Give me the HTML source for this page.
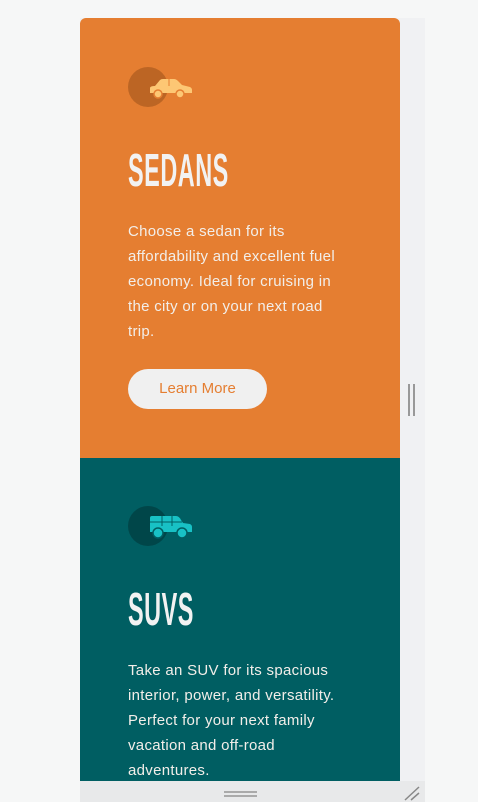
<!DOCTYPE html>
<html><head><meta charset="utf-8"><style>
*{margin:0;padding:0;box-sizing:border-box}
body{width:478px;height:802px;background:#f6f7f7;position:relative;overflow:hidden;font-family:"Liberation Sans",sans-serif}
.strip{position:absolute;left:80px;top:18px;width:345px;height:764px;background:#f0f1f3}
.card{position:absolute;left:80px;width:320px}
.o{top:18px;height:440px;background:#e57e31;border-radius:6px 6px 0 0}
.t{top:458px;height:323px;background:#005e62}
.circ{position:absolute;left:48px;width:40px;height:40px;border-radius:50%}
h2{position:absolute;left:48px;font-size:46px;font-weight:bold;color:#f2f2f2;transform:scaleX(.51);transform-origin:left top;letter-spacing:1px;line-height:46px}
p{position:absolute;left:48px;width:260px;font-size:15px;line-height:25px;color:#f2eee9;letter-spacing:.3px;white-space:nowrap}
.btn{position:absolute;left:48px;top:351px;width:139px;height:40px;border-radius:20px;background:#f0f0f0;color:#e57e31;font-size:15px;text-align:center;line-height:40px}
.bar{position:absolute;left:80px;top:781px;width:345px;height:21px;background:#e8e9ea}
</style></head><body>
<div class="strip"></div>
<div class="card o">
 <div class="circ" style="top:49px;background:#bc6524"></div>
 <svg style="position:absolute;left:68px;top:58px" width="46" height="24" viewBox="0 0 46 24"><path fill="#fdc774" d="M7 10 L12 4 Q13 3 15 3 L26 3 Q28 3 30 5 L34 9 L42 11 Q44 12 44 14 L44 17 L2 17 L2 12 Q2 10 7 10Z"/><circle cx="10" cy="18" r="4" fill="#fdc774" stroke="#e57e31" stroke-width="1.5"/><circle cx="32" cy="18" r="4" fill="#fdc774" stroke="#e57e31" stroke-width="1.5"/><path d="M21 3v7" stroke="#e57e31" stroke-width="1"/></svg>
 <h2 style="top:129px">SEDANS</h2>
 <p style="top:201px">Choose a sedan for its<br>affordability and excellent fuel<br>economy. Ideal for cruising in<br>the city or on your next road<br>trip.</p>
 <div class="btn">Learn More</div>
</div>
<div class="card t">
 <div class="circ" style="top:48px;background:#004649"></div>
 <svg style="position:absolute;left:66px;top:56px" width="48" height="26" viewBox="0 0 48 26"><path fill="#18c1c5" d="M6 2 L30 2 Q33 2 35 6 L37 9 L44 10 Q46 11 46 13 L46 18 L4 18 L4 4 Q4 2 6 2Z"/><circle cx="12" cy="19" r="5" fill="#18c1c5" stroke="#005e62" stroke-width="1.5"/><circle cx="36" cy="19" r="5" fill="#18c1c5" stroke="#005e62" stroke-width="1.5"/><path d="M4 8H36M16 2v10M26 2v10" stroke="#005e62" stroke-width="1"/></svg>
 <h2 style="top:128px">SUVS</h2>
 <p style="top:200px">Take an SUV for its spacious<br>interior, power, and versatility.<br>Perfect for your next family<br>vacation and off-road<br>adventures.</p>
</div>
<div style="position:absolute;left:408px;top:384px;width:2px;height:32px;background:#999"></div>
<div style="position:absolute;left:413px;top:384px;width:2px;height:32px;background:#999"></div>
<div class="bar"></div>
<div style="position:absolute;left:224px;top:791px;width:33px;height:2px;background:#aaa"></div>
<div style="position:absolute;left:224px;top:795px;width:33px;height:2px;background:#aaa"></div>
<svg style="position:absolute;left:403px;top:785px" width="18" height="16"><path d="M2 15L16 2M8 15L16 8" stroke="#888" stroke-width="1.5"/></svg>
</body></html>
